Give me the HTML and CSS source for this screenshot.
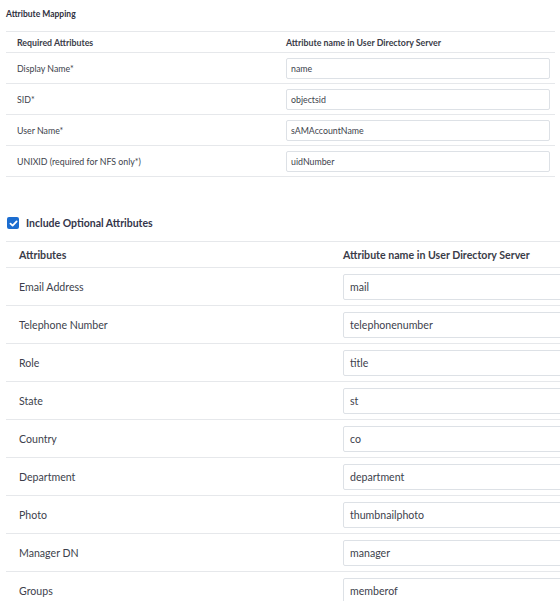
FILE: index.html
```html
<!DOCTYPE html>
<html>
<head>
<meta charset="utf-8">
<link rel="stylesheet" href="styles.css">
</head>
<body>
<div class="page">
  <div class="section-title">Attribute Mapping</div>
  <div class="table small">
    <div class="row head"><div class="c1">Required Attributes</div><div class="c2">Attribute name in User Directory Server</div></div>
    <div class="row"><div class="c1">Display Name*</div><div class="c2"><div class="input">name</div></div></div>
    <div class="row"><div class="c1">SID*</div><div class="c2"><div class="input">objectsid</div></div></div>
    <div class="row"><div class="c1">User Name*</div><div class="c2"><div class="input">sAMAccountName</div></div></div>
    <div class="row"><div class="c1">UNIXID (required for NFS only*)</div><div class="c2"><div class="input">uidNumber</div></div></div>
  </div>
  <label class="check-row">
    <span class="checkbox"><svg width="9" height="9" viewBox="0 0 10 10"><path d="M1.6 5.2 L4 7.4 L8.5 2.6" fill="none" stroke="#fff" stroke-width="2" stroke-linecap="round" stroke-linejoin="round"/></svg></span>
    <span class="check-label">Include Optional Attributes</span>
  </label>
  <div class="clip">
    <div class="table large">
      <div class="row head"><div class="c1">Attributes</div><div class="c2">Attribute name in User Directory Server</div></div>
      <div class="row"><div class="c1">Email Address</div><div class="c2"><div class="input">mail</div></div></div>
      <div class="row"><div class="c1">Telephone Number</div><div class="c2"><div class="input">telephonenumber</div></div></div>
      <div class="row"><div class="c1">Role</div><div class="c2"><div class="input">title</div></div></div>
      <div class="row"><div class="c1">State</div><div class="c2"><div class="input">st</div></div></div>
      <div class="row"><div class="c1">Country</div><div class="c2"><div class="input">co</div></div></div>
      <div class="row"><div class="c1">Department</div><div class="c2"><div class="input">department</div></div></div>
      <div class="row"><div class="c1">Photo</div><div class="c2"><div class="input">thumbnailphoto</div></div></div>
      <div class="row"><div class="c1">Manager DN</div><div class="c2"><div class="input">manager</div></div></div>
      <div class="row"><div class="c1">Groups</div><div class="c2"><div class="input">memberof</div></div></div>
    </div>
  </div>
</div>
</body>
</html>
```
FILE: styles.css
```css
html, body {
  margin: 0;
  padding: 0;
  background: #fff;
  overflow: hidden;
}
body {
  font-family: Lato, "Noto Sans", sans-serif;
  color: #3d3f4c;
}
.page {
  padding: 0 0 0 6px;
}
.section-title {
  font-size: 8.5px;
  font-weight: 700;
  line-height: 10px;
  height: 22px;
  padding-top: 9px;
  color: #2f3140;
}
.table {
  border-top: 1px solid #e6e8eb;
}
.row {
  display: grid;
  align-items: center;
  border-bottom: 1px solid #e6e8eb;
}
.head .c1, .head .c2 {
  font-weight: 700;
  color: #3a3c48;
}
.input {
  box-sizing: border-box;
  border: 1px solid #dde1e6;
  border-radius: 2px;
  background: #fff;
  display: flex;
  align-items: center;
}

.small {
  width: 549px;
  font-size: 8.8px;
}
.small .row {
  grid-template-columns: 280px 269px;
  height: 30px;
}
.small .row.head {
  height: 20px;
}
.small .c1 {
  padding-left: 11px;
}
.small .input {
  width: 264px;
  height: 21px;
  padding-left: 4px;
}

.check-row {
  display: flex;
  align-items: center;
  height: 22px;
  margin-top: 35px;
  margin-bottom: 7px;
  gap: 7px;
  padding-left: 1px;
}
.checkbox {
  width: 12px;
  height: 12px;
  border-radius: 2px;
  background: #1c6dd0;
  display: flex;
  align-items: center;
  justify-content: center;
}
.check-label {
  font-size: 10.5px;
  font-weight: 700;
  color: #34364a;
}

.clip {
  overflow: hidden;
}
.large {
  width: 660px;
  font-size: 10.6px;
}
.large .row {
  grid-template-columns: 337px 1fr;
  height: 37px;
}
.large .row.head {
  height: 25px;
}
.large .c1 {
  padding-left: 13px;
}
.large .input {
  width: 300px;
  height: 26px;
  padding-left: 6px;
}
```
